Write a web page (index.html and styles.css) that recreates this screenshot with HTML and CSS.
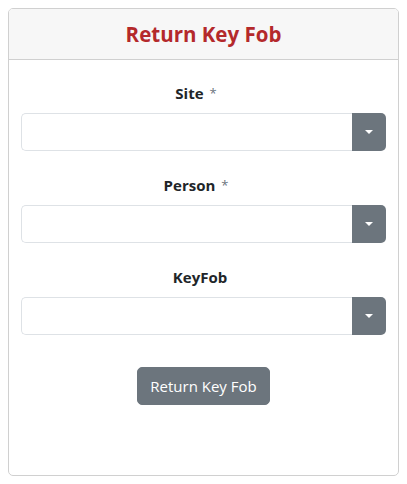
FILE: index.html
```html
<!DOCTYPE html>
<html>
<head>
<meta charset="utf-8">
<link rel="stylesheet" href="styles.css">
</head>
<body>
<div class="card">
  <div class="card-header"><h1 class="title">Return Key Fob</h1></div>
  <div class="card-body">
    <div class="group">
      <label class="label">Site <span class="req">*</span></label>
      <div class="select">
        <div class="select-field"></div>
        <div class="select-btn"><span class="caret"></span></div>
      </div>
    </div>
    <div class="group">
      <label class="label">Person <span class="req">*</span></label>
      <div class="select">
        <div class="select-field"></div>
        <div class="select-btn"><span class="caret"></span></div>
      </div>
    </div>
    <div class="group">
      <label class="label">KeyFob</label>
      <div class="select">
        <div class="select-field"></div>
        <div class="select-btn"><span class="caret"></span></div>
      </div>
    </div>
    <div class="actions">
      <button class="btn">Return Key Fob</button>
    </div>
  </div>
</div>
</body>
</html>
```
FILE: styles.css
```css
* { box-sizing: border-box; }
body {
  margin: 8px;
  font-family: "Open Sans", "Liberation Sans", sans-serif;
  color: #212529;
  background: #fff;
}
.card {
  height: 468px;
  border: 1px solid #d0d0d0;
  border-radius: 5px;
  overflow: hidden;
}
.card-header {
  background: #f7f7f7;
  border-bottom: 1px solid #d0d0d0;
  height: 51px;
  display: flex;
  align-items: center;
  justify-content: center;
}
.title {
  margin: 0;
  font-size: 20.5px;
  font-weight: 700;
  color: #b4292b;
}
.card-body {
  padding: 21px 12px 12px;
}
.group {
  display: flex;
  flex-direction: column;
  margin-bottom: 22px;
}
.label {
  display: block;
  text-align: center;
  font-size: 15px;
  font-weight: 700;
  line-height: 24px;
  margin-bottom: 8px;
  padding-right: 7px;
}
.req {
  font-weight: 400;
  color: #6c757d;
  font-size: 13px;
  vertical-align: 1px;
  margin-left: 2px;
  margin-right: 8px;
}
.select {
  display: flex;
  height: 38px;
}
.select-field {
  flex: 1;
  border: 1px solid #dee2e6;
  border-right: none;
  border-radius: 5px 0 0 5px;
}
.select-btn {
  width: 34px;
  background: #6c757d;
  border-radius: 0 5px 5px 0;
  display: flex;
  align-items: center;
  justify-content: center;
}
.caret {
  width: 0;
  height: 0;
  border-left: 4px solid transparent;
  border-right: 4px solid transparent;
  border-top: 4px solid #fff;
}
.actions {
  display: flex;
  justify-content: center;
  padding-top: 10px;
}
.btn {
  font-family: inherit;
  font-size: 15px;
  line-height: 24px;
  color: #fff;
  background: #6c757d;
  border: 1px solid #6c757d;
  border-radius: 5px;
  padding: 6px 12px;
  white-space: nowrap;
}
```
